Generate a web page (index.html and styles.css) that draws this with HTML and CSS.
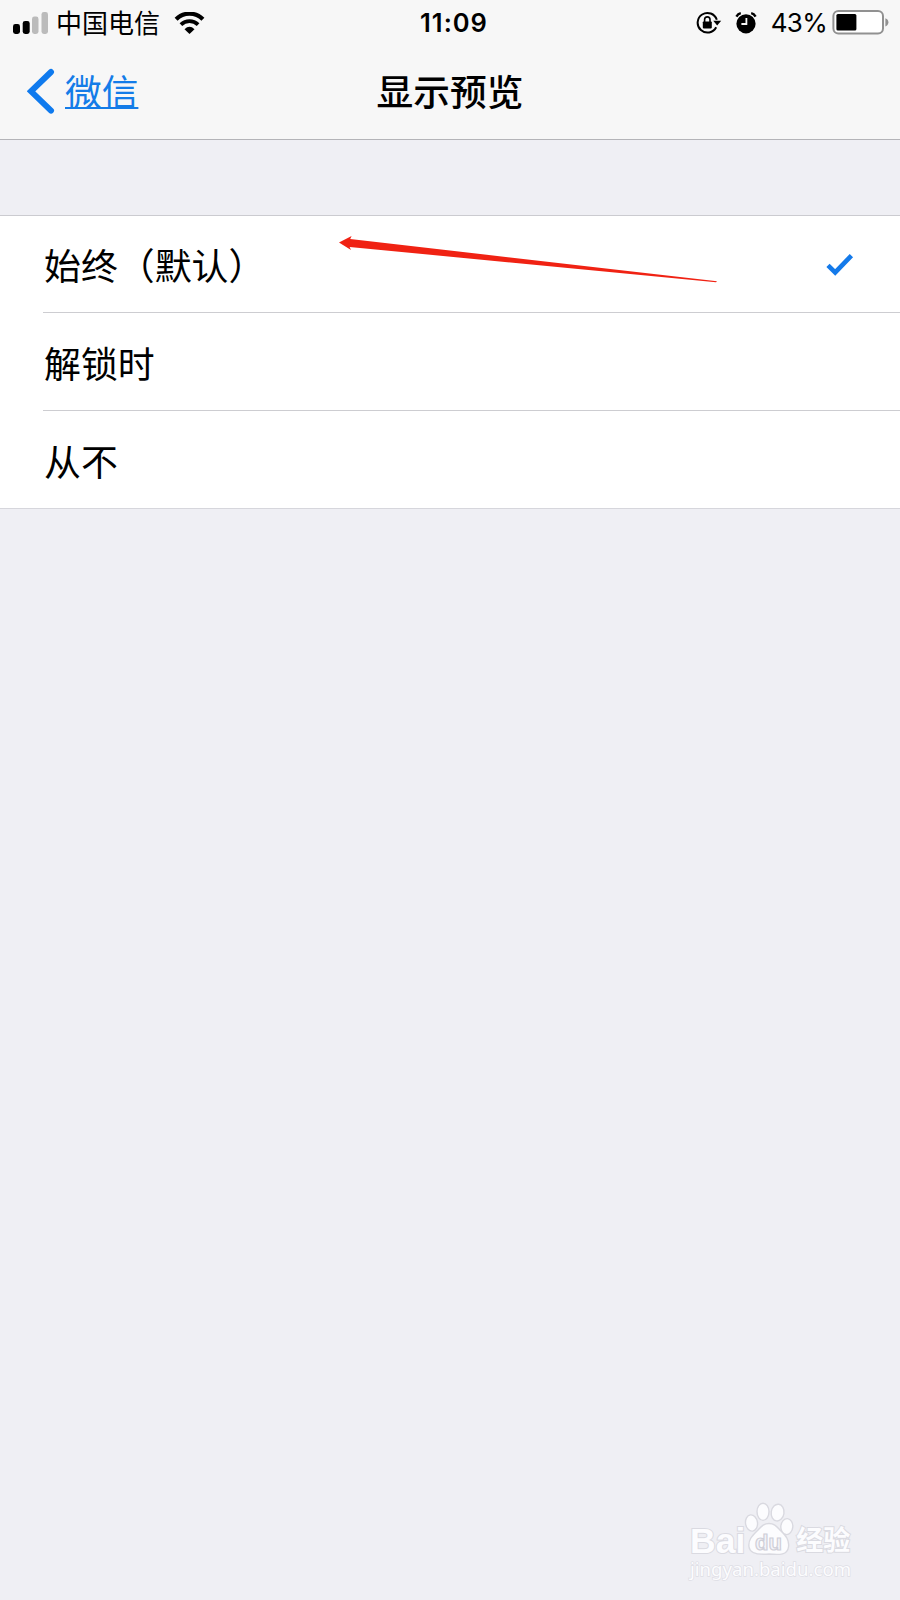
FILE: index.html
```html
<!DOCTYPE html>
<html lang="zh-CN">
<head>
    <meta charset="UTF-8">
    <meta name="viewport" content="width=device-width, initial-scale=1.0">
    <title>显示预览</title>
    <link rel="stylesheet" href="styles.css">
</head>
<body>
    <header class="header">
        <div class="status-bar">
            <div class="status-left">
                <svg class="signal" width="36" height="22" viewBox="0 0 36 22">
                    <rect x="0" y="12" width="7" height="10" rx="2.4" fill="#000"/>
                    <rect x="9.7" y="9" width="7" height="13" rx="2.4" fill="#000"/>
                    <rect x="19" y="4.5" width="6.5" height="17.5" rx="2.4" fill="#bbb"/>
                    <rect x="28.5" y="0" width="6.5" height="22" rx="2.4" fill="#bbb"/>
                </svg>
                <span class="carrier">中国电信</span>
                <svg class="wifi" width="31" height="22" viewBox="0 0 30 22">
                    <path d="M1.6 7.2C9 -.2 21 -.2 28.4 7.2" fill="none" stroke="#000" stroke-width="4.2"/>
                    <path d="M6.4 12.6C11.3 7.9 18.7 7.9 23.6 12.6" fill="none" stroke="#000" stroke-width="3.8"/>
                    <path d="M10 17.2Q15 12.4 20 17.2L15 22Z" fill="#000"/>
                </svg>
            </div>
            <span class="clock">11:09</span>
            <div class="status-right">
                <svg class="lock" width="26" height="24" viewBox="0 0 26 24">
                    <path d="M20.2 16.2A9.8 9.8 0 1 1 20.8 8.8" fill="none" stroke="#000" stroke-width="2"/>
                    <path d="M17.2 9.8H25.2L21.2 14.6Z" fill="#000"/>
                    <rect x="6.8" y="10.4" width="9" height="7" rx=".8" fill="#000"/>
                    <path d="M8.6 11V8.6A2.7 2.7 0 0 1 14 8.6V11" fill="none" stroke="#000" stroke-width="1.6"/>
                </svg>
                <svg class="alarm" width="22" height="22" viewBox="0 0 22 22">
                    <circle cx="11" cy="11.8" r="9.6" fill="#000"/>
                    <path d="M1.4 4.6Q3 1.8 5.8 1.2M20.6 4.6Q19 1.8 16.2 1.2" fill="none" stroke="#000" stroke-width="2.4"/>
                    <path d="M11.4 6V12H6.4" fill="none" stroke="#f7f7f7" stroke-width="1.8"/>
                </svg>
                <span class="percent">43%</span>
                <svg class="battery" width="57" height="26" viewBox="0 0 57 26">
                    <rect x="1.4" y="1" width="49.6" height="22.6" rx="5" fill="#fff" stroke="#919191" stroke-width="2"/>
                    <rect x="4.4" y="4" width="20" height="16.4" rx="1.5" fill="#000"/>
                    <path d="M53.4 8.2Q56.4 9.4 56.4 12.3T53.4 16.6Z" fill="#919191"/>
                </svg>
            </div>
        </div>
        <nav class="nav-bar">
            <a class="back" href="#">
                <svg width="28" height="47" viewBox="0 0 28 47">
                    <path d="M24 4L4 23.3L24 42.6" fill="none" stroke="#0f7aee" stroke-width="6" stroke-linecap="round"/>
                </svg>
                <span class="back-text">微信</span>
            </a>
            <h1 class="title">显示预览</h1>
        </nav>
    </header>

    <ul class="options">
        <li class="option">
            <span class="label">始终（默认）</span>
            <svg class="check" width="28" height="24" viewBox="0 0 28 24">
                <path d="M2 13.4L9.2 20.4L25.4 3.6" fill="none" stroke="#147aea" stroke-width="4.6"/>
            </svg>
        </li>
        <li class="option"><span class="label">解锁时</span></li>
        <li class="option"><span class="label">从不</span></li>
    </ul>

    <!-- arrow pointing at the default option -->
    <svg class="arrow" width="380" height="48" viewBox="0 0 380 48">
        <path d="M0 7.4L12.6 1L11.2 4L378 46.3L377 47.2L10.6 12L12 15Z" fill="#f02213"/>
    </svg>

    <div class="watermark">
        <div class="mark-row">
            <span class="mark-bai">Bai</span>
            <svg class="paw" width="50" height="54" viewBox="0 0 50 54">
                <g fill="#fcfcfe" stroke="#d9d9e0" stroke-width="1.4">
                    <ellipse cx="7.5" cy="21" rx="6" ry="8.2" transform="rotate(-8 7.5 21)"/>
                    <ellipse cx="19" cy="9.8" rx="6" ry="8.6"/>
                    <ellipse cx="33.6" cy="10.6" rx="6.4" ry="8.4" transform="rotate(8 33.6 10.6)"/>
                    <ellipse cx="42.8" cy="24.6" rx="6" ry="8" transform="rotate(5 42.8 24.6)"/>
                    <path d="M25 21.5C31 21.5 33 25 37 29C42 34 45.5 38 44.5 45C43.5 53 36 53 25 52C14 53 6 52 5 45C4 38 8 34 13 29C17 25 19 21.5 25 21.5Z"/>
                </g>
                <text class="paw-text" x="24.5" y="47.5" text-anchor="middle">du</text>
            </svg>
            <span class="mark-cn">经验</span>
        </div>
        <div class="mark-url">jingyan.baidu.com</div>
    </div>
</body>
</html>
```
FILE: styles.css
```css
* {
    box-sizing: border-box;
}

body {
    margin: 0;
    min-height: 1600px;
    position: relative;
    background-color: #efeff4;
    color: #000;
    font-family: "Noto Sans CJK SC", sans-serif;
}

.header {
    height: 140px;
    background-color: #f7f7f7;
    border-bottom: 1px solid #b4b4b8;
}

.status-bar {
    display: grid;
    grid-template-columns: 1fr auto 1fr;
    align-items: center;
    height: 44px;
    padding: 0 11px 0 13px;
}

.status-left, .status-right {
    display: flex;
    align-items: center;
}

.status-right {
    justify-content: flex-end;
}

.carrier {
    margin-left: 7px;
    padding-bottom: 2px;
    font-size: 26px;
    line-height: 42px;
}

.wifi {
    margin-left: 14px;
}

.clock {
    margin-left: 6px;
    font-family: Inter, sans-serif;
    font-size: 25.5px;
    font-weight: 600;
    letter-spacing: 1px;
    line-height: 46px;
}

.lock, .alarm {
    margin-bottom: 1px;
}

.alarm {
    margin-left: 13px;
}

.percent {
    margin-left: 14px;
    font-family: Inter, sans-serif;
    font-size: 26px;
    letter-spacing: -0.7px;
    line-height: 46px;
}

.battery {
    margin-left: 5px;
}

.nav-bar {
    display: grid;
    grid-template-columns: 1fr auto 1fr;
    align-items: center;
    height: 95px;
    padding: 0 27px;
}

.back {
    display: flex;
    align-items: center;
    color: #147ce8;
    text-decoration: none;
}

.back-text {
    margin-left: 10px;
    padding-bottom: 3px;
    font-size: 36.7px;
    line-height: 50px;
    text-decoration: underline;
    text-decoration-thickness: 2px;
    text-underline-offset: 1px;
    text-decoration-skip-ink: none;
}

.title {
    margin: 0;
    padding-bottom: 3px;
    font-size: 36.7px;
    font-weight: 500;
    line-height: 50px;
}

.options {
    margin: 75px 0 0;
    padding: 0 0 0 43px;
    list-style: none;
    background-color: #fff;
    border-top: 1px solid #cbcbd0;
    border-bottom: 1px solid #d6d6dc;
}

.option {
    display: flex;
    justify-content: space-between;
    align-items: center;
    height: 96px;
    padding: 0 46px 0 1px;
    font-size: 36.9px;
    line-height: 50px;
}

.option + .option {
    height: 98px;
    border-top: 1px solid #cdcdd1;
}

/* lies over the first option */
.arrow {
    position: absolute;
    left: 339px;
    top: 235px;
}

.watermark {
    position: absolute;
    left: 690px;
    top: 1502px;
    width: 164px;
    color: #fcfcfe;
}

.mark-row {
    display: flex;
    align-items: flex-end;
    height: 54px;
}

.mark-bai, .mark-cn {
    -webkit-text-stroke: 2px #dadae1;
    paint-order: stroke fill;
}

.mark-bai {
    font-family: "Liberation Sans", sans-serif;
    font-size: 35.5px;
    font-weight: bold;
    line-height: 36px;
    margin-bottom: -3px;
}

.paw {
    flex: none;
    margin-left: -1px;
}

.paw-text {
    fill: #f4f4f8;
    stroke: #cfcfd8;
    stroke-width: 1.2px;
    font-family: "Liberation Sans", sans-serif;
    font-size: 22px;
    font-weight: bold;
}

.mark-cn {
    margin-left: 2px;
    margin-bottom: 1px;
    font-size: 27px;
    font-weight: 700;
    line-height: 32px;
    white-space: nowrap;
}

.mark-url {
    margin-top: 2px;
    font-family: "Noto Sans", sans-serif;
    font-size: 18.6px;
    line-height: 22px;
    -webkit-text-stroke: 1.4px #dedee5;
    paint-order: stroke fill;
}
```
